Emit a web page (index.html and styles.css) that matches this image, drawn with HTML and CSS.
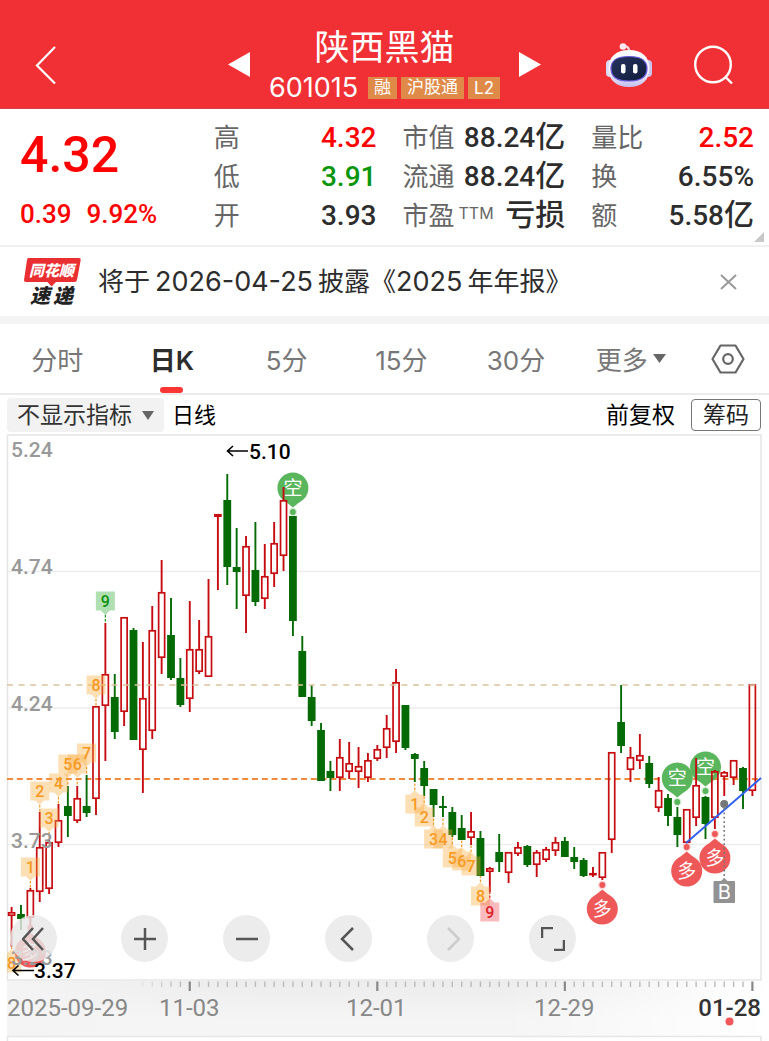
FILE: index.html
```html
<!DOCTYPE html>
<html lang="zh-CN">
<head>
<meta charset="utf-8">
<meta name="viewport" content="width=device-width, initial-scale=1">
<title>陕西黑猫 601015</title>
<link rel="stylesheet" href="styles.css">
</head>
<body>
<header class="topbar">
  <button class="icon-btn back" aria-label="返回">
    <svg width="24" height="40" viewBox="0 0 24 40"><path d="M20 2 2 20.500 20 38.500" fill="none" stroke="#fff" stroke-width="2.200"/></svg>
  </button>
  <div class="switcher">
    <button class="icon-btn" aria-label="上一只"><svg width="22" height="26" viewBox="0 0 22 26"><path d="M22 0v25L0 12.500z" fill="#fff"/></svg></button>
    <div class="stock">
      <h1 class="stock-name">陕西黑猫</h1>
      <div class="stock-meta"><span class="stock-code">601015</span><span class="tag">融</span><span class="tag">沪股通</span><span class="tag tag-latin">L2</span></div>
    </div>
    <button class="icon-btn" aria-label="下一只"><svg width="22" height="26" viewBox="0 0 22 26"><path d="M0 0v25l22-12.500z" fill="#fff"/></svg></button>
  </div>
  <div class="actions">
    <button class="icon-btn" aria-label="智能助手">
      <svg width="48" height="46" viewBox="0 0 48 46">
        <defs>
          <linearGradient id="shell" x1="0" y1="0" x2="0" y2="1"><stop offset="0" stop-color="#fff"/><stop offset=".6" stop-color="#f1effc"/><stop offset="1" stop-color="#c5bfee"/></linearGradient>
          <linearGradient id="visor" x1="0" y1="0" x2="1" y2="1"><stop offset="0" stop-color="#27335c"/><stop offset="1" stop-color="#101c3c"/></linearGradient>
        </defs>
        <path d="M18 4.500c4-1 6 1 6.500 5" fill="none" stroke="#f5d9e4" stroke-width="2.200"/>
        <circle cx="18" cy="4.500" r="3.300" fill="#fbeaf1"/>
        <rect x="1" y="18" width="8" height="17" rx="4" fill="#dcd9f2"/>
        <rect x="39" y="18" width="8" height="17" rx="4" fill="#c9c5ee"/>
        <path d="M24 8c13 0 20.500 7 20.500 18.500S37 45 24 45 3.500 38 3.500 26.500 11 8 24 8z" fill="url(#shell)"/>
        <path d="M24 14.500c12 0 18 3.500 18 12S36 39 24 39 6 35 6 26.500s6-12 18-12z" fill="url(#visor)" stroke="#6b5be0" stroke-width="1.200"/>
        <rect x="16" y="22" width="4.500" height="9.500" rx="2" fill="#fff"/><rect x="28" y="22" width="4.500" height="9.500" rx="2" fill="#fff"/>
      </svg>
    </button>
    <button class="icon-btn" aria-label="搜索">
      <svg width="40" height="40" viewBox="0 0 40 40" fill="none" stroke="#fff" stroke-width="2.400"><circle cx="19" cy="19.500" r="17.800"/><path d="m31.500 32 6.500 6.500"/></svg>
    </button>
  </div>
</header>

<section class="quote">
  <div class="price-box"><strong class="price">4.32</strong><div class="change"><span>0.39</span><span>9.92%</span></div></div>
  <dl class="stats">
    <div class="stat"><dt>高</dt><dd class="up">4.32</dd></div>
    <div class="stat"><dt>低</dt><dd class="down">3.91</dd></div>
    <div class="stat"><dt>开</dt><dd>3.93</dd></div>
  </dl>
  <dl class="stats">
    <div class="stat"><dt>市值</dt><dd>88.24<span class="unit">亿</span></dd></div>
    <div class="stat"><dt>流通</dt><dd>88.24<span class="unit">亿</span></dd></div>
    <div class="stat"><dt>市盈<span class="ttm">TTM</span></dt><dd><span class="unit">亏损</span></dd></div>
  </dl>
  <dl class="stats">
    <div class="stat"><dt>量比</dt><dd class="up">2.52</dd></div>
    <div class="stat"><dt>换</dt><dd>6.55%</dd></div>
    <div class="stat"><dt>额</dt><dd>5.58<span class="unit">亿</span></dd></div>
  </dl>
  <svg class="corner" width="10" height="10" viewBox="0 0 10 10"><path d="M10 0v10H0z" fill="#c8c8c8"/></svg>
</section>

<section class="news">
  <svg class="news-logo" width="60" height="60" viewBox="0 -5 60 60" role="img" aria-label="同花顺速递">
    <path d="M5.500 1H56q2 0 1.700 2L54 23q-.4 2-2.500 2H33l-4.500 4.500L24.500 25H3Q.7 25 1 23L4 3q.3-2 1.500-2z" fill="#ea2f32"/>
    <text class="logo-top" x="6" y="19">同花顺</text>
    <text class="logo-bottom" x="7" y="46">速</text><text class="logo-bottom" x="30" y="46">递</text>
  </svg>
  <a class="news-text" href="#">将于<span class="num date-num">2026-04-25</span>披露《<span class="num">2025</span><span class="gap">年年报》</span></a>
  <button class="icon-btn" aria-label="关闭"><svg width="17" height="16" viewBox="0 0 17 16"><path d="m1 1 15 14M16 1 1 15" stroke="#999" stroke-width="2"/></svg></button>
</section>

<nav class="tabs">
  <button class="tab">分时</button>
  <button class="tab active">日K</button>
  <button class="tab">5分</button>
  <button class="tab">15分</button>
  <button class="tab">30分</button>
  <button class="tab more" aria-haspopup="menu">更多<svg width="13" height="9" viewBox="0 0 13 9"><path d="M0 0h13L6.500 9z" fill="#666"/></svg></button>
  <button class="icon-btn settings" aria-label="设置">
    <svg width="34" height="30" viewBox="0 0 34 30" fill="none" stroke="#666" stroke-width="2.200"><path d="M9.500 1.500h15L32.500 15l-8 13.500h-15L1.500 15z" stroke-linejoin="round"/><circle cx="17" cy="15" r="4.800"/></svg>
  </button>
</nav>

<div class="toolbar">
  <div class="select-box">
    <select class="indicator" aria-label="指标"><option>不显示指标</option></select>
    <svg class="caret" width="12" height="9" viewBox="0 0 12 9"><path d="M0 0h12L6 9z" fill="#666"/></svg>
  </div>
  <span class="period">日线</span>
  <button class="adjust">前复权</button>
  <button class="chips">筹码</button>
</div>

<main class="chart">
  <svg id="kline" class="kline" viewBox="0 434 769 607" role="img" aria-label="日K线图"></svg>
  <div class="controls">
    <button class="round first" aria-label="快速后退"><svg width="24" height="24" viewBox="0 0 24 24"><path d="M11 1 1 12l10 11M21 1 11 12l10 11"/></svg></button>
    <button class="round" aria-label="放大"><svg width="24" height="24" viewBox="0 0 24 24"><path d="M12 1v22M1 12h22"/></svg></button>
    <button class="round" aria-label="缩小"><svg width="24" height="24" viewBox="0 0 24 24"><path d="M1 12h22"/></svg></button>
    <button class="round" aria-label="左移"><svg width="24" height="24" viewBox="0 0 24 24"><path d="M16 1 5 12l11 11"/></svg></button>
    <button class="round" aria-label="右移" disabled><svg width="24" height="24" viewBox="0 0 24 24"><path d="m9 1 11 11L9 23"/></svg></button>
    <button class="round" aria-label="全屏"><svg width="24" height="24" viewBox="0 0 24 24"><path d="M1 11V1h11M23 13v10H13"/></svg></button>
  </div>
</main>
<script src="chart.js"></script>
</body>
</html>
```
FILE: styles.css
```css
* { box-sizing: border-box; }
body { margin: 0; background: #fff; color: #2d2d2d; font-family: Inter, "Noto Sans CJK SC", sans-serif; }
button, select { font: inherit; color: inherit; background: none; border: 0; padding: 0; }
h1, dl, dd { margin: 0; }
svg { display: block; flex: none; }
.icon-btn { display: block; flex: none; }

.topbar { display: grid; grid-template-columns: 1fr auto 1fr; align-items: center; height: 109px; padding: 21px 35px 0; background: #f03035; border-bottom: 1px solid #d8434a; color: #fff; }
.back { justify-self: start; }
.switcher { display: flex; align-items: center; gap: 19px; }
.stock { display: flex; flex-direction: column; align-items: center; }
.stock-name { font-size: 35px; line-height: 46px; font-weight: 400; }
.stock-meta { display: flex; align-items: center; gap: 4px; height: 36px; }
.stock-code { font-size: 27px; margin-right: 6px; }
.tag { height: 22px; padding: 0 6px; background: #e08a49; font-size: 17px; line-height: 20px; }
.tag-latin { line-height: 22px; }
.actions { display: flex; align-items: center; justify-content: flex-end; gap: 41px; }

.quote { position: relative; display: grid; grid-template-columns: 168fr 163fr 163fr 163fr; column-gap: 26px; padding: 9px 15px 10px 20px; border-bottom: 2px solid #f0f0f0; }
.price-box { display: flex; flex-direction: column; color: #f00; font-family: Roboto, sans-serif; padding-top: 7px; }
.price { font-size: 50px; line-height: 60px; font-weight: 500; }
.change { display: flex; gap: 15px; margin-top: 12px; font-size: 26px; line-height: 34px; font-weight: 500; }
.stat { display: flex; justify-content: space-between; align-items: center; height: 39px; white-space: nowrap; }
.stat dt { display: flex; font-size: 26px; line-height: 38px; color: #666; }
.stat dd { font-family: Roboto, "Noto Sans CJK SC", sans-serif; font-size: 28px; line-height: 38px; font-weight: 500; }
.stat .up { color: #f00; }
.stat .down { color: #0a960a; }
.unit { font-size: 30px; line-height: 36px; }
.ttm { margin-left: 4px; font-size: 16px; line-height: 32px; }
.corner { position: absolute; right: 5px; bottom: 3px; }

.news { display: flex; align-items: center; height: 77px; padding: 0 32px 0 23px; border-bottom: 8px solid #f4f4f4; }
.logo-top, .logo-bottom { font-family: "Noto Sans CJK SC", sans-serif; font-weight: 900; font-style: italic; }
.logo-top { font-size: 15px; fill: #fff; }
.logo-bottom { font-size: 20px; fill: #222; }
.news-text { flex: 1; margin-left: 15px; font-size: 26px; line-height: 38px; color: #2d2d2d; text-decoration: none; white-space: nowrap; }
.num { font-size: 27px; }
.date-num { margin: 0 5px; }
.gap { margin-left: 5px; }

.tabs { display: grid; grid-template-columns: repeat(6, 1fr) 81px; height: 71px; border-bottom: 2px solid #ebebeb; }
.tab { position: relative; font-size: 26px; color: #777; }
.active { font-weight: 600; color: #2d2d2d; }
.active::after { content: ""; position: absolute; left: 50%; bottom: 0; width: 23px; height: 6px; margin-left: -12px; border-radius: 3px; background: #fb3634; }
.more { display: flex; align-items: center; justify-content: center; gap: 5px; }
.settings { place-self: center; }

.toolbar { display: flex; align-items: center; height: 39px; padding: 0 8px 0 7px; font-size: 23px; line-height: 30px; color: #000; }
.select-box { position: relative; }
.indicator { appearance: none; display: block; width: 157px; height: 34px; padding: 0 10px; border-radius: 4px; background: #f2f2f2; color: #333; }
.caret { position: absolute; right: 10px; top: 13px; pointer-events: none; }
.period { margin-left: 8px; font-size: 22px; }
.adjust { margin-left: auto; }
.chips { width: 70px; height: 32px; margin-left: 16px; border: 1px solid #777; border-radius: 4px; color: #222; line-height: 28px; }

.chart { position: relative; }
.kline { width: 100%; height: auto; }
.kline text { font-family: Roboto, "Noto Sans CJK SC", sans-serif; }
.scale { font-size: 21px; fill: #999; font-weight: 500; }
.extreme { font-size: 21px; fill: #000; font-weight: 500; }
.date { font-size: 24px; fill: #888; }
.date.last { fill: #333; font-weight: 500; }
.badge { font-size: 16px; font-weight: 500; text-anchor: middle; }
.sign { font-size: 19px; fill: #fff; text-anchor: middle; }
.kline .buy { font-family: Inter, sans-serif; font-size: 20px; fill: #fff; text-anchor: middle; }
.controls { position: absolute; left: 10px; bottom: 79px; display: flex; gap: 55px; }
.round { display: flex; align-items: center; justify-content: center; width: 47px; height: 47px; border-radius: 50%; background: rgba(232, 232, 232, .82); }
.round svg { fill: none; stroke: #555; stroke-width: 2.5; }
.round:disabled svg { stroke: #ccc; }
.first { margin-right: 9px; }
@media (max-width: 640px) { .controls { gap: 12px; } }
```
FILE: chart.js
```js
const svg = document.getElementById('kline');
const NS = 'http://www.w3.org/2000/svg';
const RED = '#c60c10', GREEN = '#046a04';
const xAt = i => 11.6 + i * 9.377;

function add(name, attrs, text) {
  const el = document.createElementNS(NS, name);
  for (const key in attrs) el.setAttribute(key, attrs[key]);
  if (text !== undefined) el.textContent = text;
  svg.appendChild(el);
  return el;
}

// direction, high, body top, body bottom, low
const candles = [
  ['r',907,912,916,947],['g',905,914,919,930],['r',888,890,918,926],['r',812,847,892,902],['r',840,842,889,894],
  ['r',804,820,843,847],['g',786,806,816,837],['r',786,798,821,823],['g',775,806,813,817],['r',706,706,799,815],
  ['r',623,674,706,761],['g',674,697,732,739],['r',617,617,712,726],['g',628,630,740,740],['r',642,698,750,793],
  ['r',606,630,731,739],['r',560,592,658,674],['g',598,635,678,680],['g',658,678,705,707],['r',601,649,699,712],
  ['r',620,649,672,674],['r',579,636,677,677],['r',514,514,517,590],['g',474,500,567,585],['g',528,567,572,609],
  ['r',536,546,596,633],['g',522,570,602,606],['r',544,576,599,609],['r',522,543,574,587],['r',487,500,556,571],
  ['g',516,516,621,636],['g',636,651,697,697],['g',685,697,721,726],['g',723,730,781,781],['g',761,771,778,791],
  ['r',739,757,778,791],['r',742,763,772,779],['r',747,766,772,788],['r',753,760,778,782],['r',745,749,759,761],
  ['r',715,728,748,758],['r',669,682,742,753],['g',705,705,748,750],['g',753,754,759,782],['g',761,768,786,796],
  ['g',789,789,805,817],['g',796,806,808,817],['g',807,812,835,837],['g',815,828,840,840],['r',812,831,838,845],
  ['g',831,838,876,876],['r',867,868,872,892],['g',834,852,862,872],['r',852,852,873,883],['r',842,847,854,856],
  ['g',845,846,865,867],['r',850,852,865,877],['r',847,849,860,862],['r',837,842,851,856],['g',837,841,857,857],
  ['g',847,857,862,869],['g',858,860,876,877],['r',867,873,875,877],['r',852,852,878,880],['r',752,752,840,853],
  ['g',685,722,746,753],['r',747,757,770,782],['r',734,755,761,769],['g',756,763,784,788],['r',777,790,808,812],
  ['g',794,798,816,826],['g',807,817,835,847],['r',809,809,843,843],['r',758,785,818,826],['g',796,797,824,839],
  ['r',770,771,818,829],['r',771,772,777,796],['r',760,760,778,785],['g',767,768,791,809],['r',684,684,791,796]
];

// candle index, label, box centre y, tip direction, colour
const badges = [
  [0,'8',963,-1,'o'],[2,'1',867,1,'o'],[3,'2',791,1,'o'],[4,'3',818,1,'o'],[5,'4',783,1,'o'],[6,'5',764,1,'o'],[7,'6',764,1,'o'],
  [8,'7',753,1,'o'],[9,'8',685,1,'o'],[10,'9',601,1,'g'],[43,'1',804,-1,'o'],[44,'2',817,-1,'o'],[45,'3',839,-1,'o'],
  [46,'4',839,-1,'o'],[47,'5',858,-1,'o'],[48,'6',861,-1,'o'],[49,'7',866,-1,'o'],[50,'8',896,-1,'o'],[51,'9',912,-1,'r']
];
const palette = {
  o: ['rgba(250,170,60,.38)', '#f7981f'],
  g: ['rgba(80,185,85,.45)', '#0f920f'],
  r: ['rgba(238,60,65,.35)', '#df1f28']
};

const defs = add('defs', {});
defs.innerHTML = '<linearGradient id="axisV" x1="0" y1="0" x2="0" y2="1"><stop offset="0" stop-color="#ececec"/><stop offset=".7" stop-color="#f5f5f5"/></linearGradient>' +
  '<linearGradient id="axisFade" x1="0" y1="0" x2="1" y2="0"><stop offset="0" stop-color="#f4f4f4"/><stop offset=".3" stop-color="#f4f4f4" stop-opacity="0"/><stop offset=".65" stop-color="#fff" stop-opacity="0"/><stop offset="1" stop-color="#fff"/></linearGradient>' +
  '<clipPath id="plot"><rect x="7" y="434" width="756" height="548"/></clipPath>';

// frame, grid and time strip
add('rect', {x: 7, y: 981, width: 762, height: 55, fill: 'url(#axisV)'});
add('rect', {x: 7, y: 981, width: 762, height: 55, fill: 'url(#axisFade)'});
add('path', {d: 'M7 435H761V980H7.500V435M7 1036.500H761V1041M7.500 1036V1041', fill: 'none', stroke: '#e6e6e6', 'stroke-width': 1.6});
add('path', {d: 'M8 571.500H760M8 708H760M8 844.500H760', stroke: '#ededed', 'stroke-width': 1.5});
add('path', {d: 'M7 779H761', stroke: '#f08a3c', 'stroke-width': 2, 'stroke-dasharray': '6 3.800'});

// trade signals: centre x, centre y, kind
[[30.4,952,'r'],[602.3,909,'r'],[686.7,871,'r'],[714.9,858,'r'],[292.9,488,'g'],[677.3,778,'g'],[705.5,767,'g']].forEach(([x, y, kind]) => {
  const up = kind === 'r' ? -1 : 1;
  const fill = kind === 'r' ? '#ee5859' : '#5ab65d';
  add('circle', {cx: x, cy: y, r: 15.5, fill});
  add('path', {d: `M${x - 8} ${y + up * 13}L${x} ${y + up * 19.5}L${x + 8} ${y + up * 13}z`, fill});
  add('circle', {cx: x, cy: y + up * 24, r: 4.2, fill, 'fill-opacity': .25});
  add('circle', {cx: x, cy: y + up * 24, r: 2.9, fill});
  add('text', {class: 'sign', x, y: y + 7}, kind === 'r' ? '多' : '空');
});

candles.forEach(([dir, high, top, bottom, low], i) => {
  const x = xAt(i), color = dir === 'r' ? RED : GREEN;
  if (dir === 'r') {
    if (high < top) add('path', {d: `M${x} ${high}V${top}`, stroke: color, 'stroke-width': 1.9});
    if (low > bottom) add('path', {d: `M${x} ${bottom}V${low}`, stroke: color, 'stroke-width': 1.9});
    const inner = Math.max(bottom - top - 1.6, .8);
    add('rect', {x: x - 3, y: top + .8, width: 6, height: inner, fill: 'none', stroke: color, 'stroke-width': 1.7});
  } else {
    add('path', {d: `M${x} ${high}V${low}`, stroke: color, 'stroke-width': 1.9});
    add('rect', {x: x - 3.9, y: top, width: 7.8, height: Math.max(bottom - top, 2), fill: color});
  }
});
add('path', {d: 'M7 685H761', stroke: '#dcc49f', 'stroke-width': 1.5, 'stroke-dasharray': '6 5.600'});

badges.forEach(([i, label, y, tip, kind]) => {
  const x = xAt(i), [box, ink] = palette[kind];
  const edge = y + tip * 9.5, point = y + tip * 14;
  add('path', {d: `M${x - 9.5} ${y - 9.5}h19v19h-19zM${x - 4.5} ${edge}L${x} ${point}L${x + 4.5} ${edge}z`, fill: box, 'clip-path': 'url(#plot)'});
  const end = tip > 0 ? candles[i][1] : candles[i][4];
  add('path', {d: `M${x} ${point}V${end}`, stroke: ink, 'stroke-width': 1.2, 'stroke-dasharray': '2.500 1.500'});
  add('text', {class: 'badge', x, y: y + 6, fill: ink}, label);
});

// trend line and buy point
add('path', {d: 'M686 843L761 778', stroke: '#2f60ef', 'stroke-width': 1.9});
add('circle', {cx: 724.2, cy: 804, r: 4, fill: '#777'});
add('path', {d: 'M724.2 808V879', stroke: '#777', 'stroke-width': 1.6, 'stroke-dasharray': '1.800 2.600'});
add('path', {d: 'M714.500 881H721L724.200 878L727.500 881H734q1 0 1 1V902q0 1-1 1H714.500q-1 0-1-1V882q0-1 1-1z', fill: '#929292'});
add('text', {class: 'buy', x: 724.2, y: 899}, 'B');

[['5.24',457],['4.74',574],['4.24',711],['3.73',848],['3.23',965]].forEach(([t, y]) => add('text', {class: 'scale', x: 11, y}, t));
add('path', {d: 'M248 451H227.500M233 446L227.500 451L233 456', fill: 'none', stroke: '#000', 'stroke-width': 1.6});
add('text', {class: 'extreme', x: 249, y: 459}, '5.10');
add('path', {d: 'M34 970.500H13M18.500 965.500L13 970.500L18.500 975.500', fill: 'none', stroke: '#000', 'stroke-width': 1.6});
add('text', {class: 'extreme', x: 34, y: 978}, '3.37');

for (let i = 14; i < 80; i++) {
  const major = i % 20 === 19;
  const x = xAt(i);
  add('path', {d: `M${x} 981.500V${major ? 991 : 987}`, stroke: major ? '#888' : '#bbb', 'stroke-width': major ? 2.2 : 1.4, opacity: Math.min(1, (i - 13) / 5)});
}
[['2025-09-29',7],['11-03',159],['12-01',346],['12-29',534]].forEach(([t, x]) => add('text', {class: 'date', x, y: 1016}, t));
add('text', {class: 'date last', x: 761, y: 1016, 'text-anchor': 'end'}, '01-28');
add('circle', {cx: 729.5, cy: 1021.5, r: 4, fill: '#f1585b'});
```
